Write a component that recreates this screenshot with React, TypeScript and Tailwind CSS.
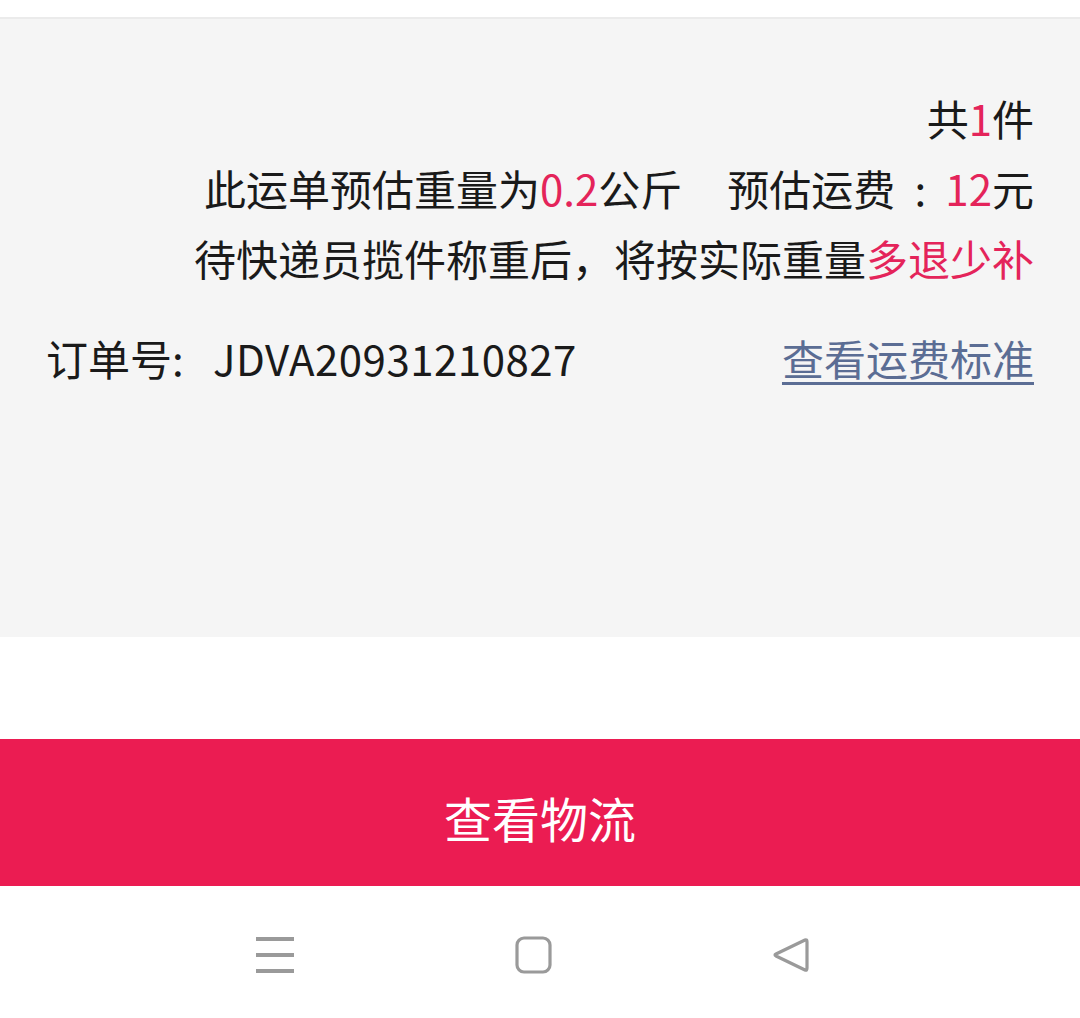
import React from "react";

const font = { fontFamily: '"Noto Sans CJK SC", "Noto Sans", sans-serif' };

export default function App() {
  return (
    <div className="w-[1080px] h-[1018px] bg-white flex flex-col overflow-hidden" style={font}>
      <div className="h-[19px] bg-white border-b-2 border-[#ebebeb]" />
      <div className="h-[618px] bg-[#f5f5f5] pt-[64px] px-[46px] text-[#1a1a1a] text-[42px] leading-[70px]">
        <div className="text-right">
          共<span className="text-[#e4245a]">1</span>件
        </div>
        <div className="text-right whitespace-pre">
          此运单预估重量为<span className="text-[#e4245a]">0.2</span>公斤<span className="inline-block w-[45px]" />预估运费<span className="inline-block w-[50px] text-center">:</span><span className="text-[#e4245a]">12</span>元
        </div>
        <div className="text-right">
          待快递员揽件称重后，将按实际重量<span className="text-[#e4245a]">多退少补</span>
        </div>
        <div className="mt-[30px] flex justify-between items-center">
          <span>订单号<span className="inline-block w-[41px]">:</span><span className="tracking-[0.5px]">JDVA20931210827</span></span>
          <span className="text-[#5b6d94] underline decoration-[3px] underline-offset-[6px]">查看运费标准</span>
        </div>
      </div>
      <div className="h-[102px] bg-white" />
      <div className="h-[147px] bg-[#eb1c52] flex items-center justify-center pt-[8px] text-white text-[48px]">
        查看物流
      </div>
      <div className="flex-1 bg-white flex items-center justify-between pl-[255px] pr-[270px] pt-[6px]">
        <svg width="40" height="38" viewBox="0 0 40 38">
          <g stroke="#9a9a9a" strokeWidth="4">
            <line x1="1" y1="3" x2="39" y2="3" />
            <line x1="1" y1="19" x2="39" y2="19" />
            <line x1="1" y1="35" x2="39" y2="35" />
          </g>
        </svg>
        <svg width="38" height="38" viewBox="0 0 38 38">
          <rect x="2" y="2" width="33" height="34" rx="7" fill="none" stroke="#9a9a9a" strokeWidth="3.2" />
        </svg>
        <svg width="38" height="38" viewBox="0 0 38 38">
          <path d="M33 4 Q35 3 35 6 L35 32 Q35 35 33 34 L4 20 Q2 19 4 18 Z" fill="none" stroke="#9a9a9a" strokeWidth="3.2" strokeLinejoin="round" />
        </svg>
      </div>
    </div>
  );
}
